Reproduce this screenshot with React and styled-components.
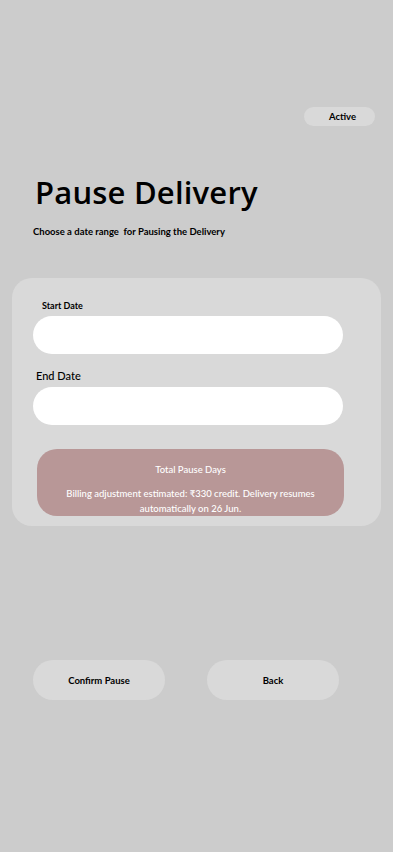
import React from "react";
import styled, { createGlobalStyle } from "styled-components";

const Global = createGlobalStyle`
  html, body { margin: 0; padding: 0; background: #cccccc; }
  body { font-family: "Lato", "Noto Sans", sans-serif; color: #000; }
  * { box-sizing: border-box; }
`;

const Page = styled.div`
  width: 393px;
  min-height: 852px;
  background: #cccccc;
  display: flex;
  flex-direction: column;
  padding-top: 107px;
`;

const TopRow = styled.div`
  display: flex;
  justify-content: flex-end;
  padding-right: 18px;
`;

const StatusPill = styled.div`
  width: 71px;
  height: 19px;
  border-radius: 10px;
  background: #d9d9d9;
  display: flex;
  align-items: center;
  justify-content: center;
  font-size: 9.5px;
  font-weight: 700;
  padding-left: 6px;
`;

const Title = styled.h1`
  margin: 46px 0 0 35px;
  font-family: "Open Sans", "Lato", sans-serif;
  font-size: 31px;
  line-height: 40px;
  font-weight: 600;
  letter-spacing: 0.2px;
`;

const Subtitle = styled.p`
  margin: 14px 0 0 33px;
  font-size: 9.5px;
  line-height: 12px;
  font-weight: 700;
  white-space: pre;
`;

const Card = styled.section`
  margin: 40px 12px 0 12px;
  height: 248px;
  background: #d9d9d9;
  border-radius: 20px;
  padding: 22px 38px 0 21px;
  display: flex;
  flex-direction: column;
`;

const Label = styled.label`
  font-size: ${(p) => p.$size}px;
  font-weight: ${(p) => p.$weight};
  line-height: 12px;
  margin-left: ${(p) => p.$indent}px;
  margin-bottom: ${(p) => p.$gap}px;
`;

const Field = styled.div`
  height: 38px;
  border-radius: 19px;
  background: #ffffff;
  margin-bottom: ${(p) => p.$after}px;
`;

const Summary = styled.div`
  margin: 0 -1px 0 4px;
  height: 67px;
  border-radius: 20px;
  background: #b89797;
  color: #ffffff;
  display: flex;
  flex-direction: column;
  align-items: center;
  padding: 15px 12px 0;
  text-align: center;
  font-size: 9.5px;
  font-weight: 500;
`;

const SummaryTitle = styled.div`
  line-height: 12px;
  margin-bottom: 10px;
`;

const SummaryText = styled.div`
  line-height: 15px;
`;

const Actions = styled.div`
  margin-top: 134px;
  padding: 0 54px 0 33px;
  display: flex;
  justify-content: space-between;
`;

const ActionButton = styled.button`
  width: 132px;
  height: 40px;
  border-radius: 20px;
  border: none;
  background: #d9d9d9;
  font-family: inherit;
  font-size: 9.5px;
  font-weight: 700;
  color: #000;
`;

export default function App() {
  return (
    <>
      <Global />
      <Page>
        <TopRow>
          <StatusPill>Active</StatusPill>
        </TopRow>
        <Title>Pause Delivery</Title>
        <Subtitle>Choose a date range  for Pausing the Delivery</Subtitle>
        <Card>
          <Label $size={9} $weight={700} $indent={9} $gap={4}>Start Date</Label>
          <Field $after={16} />
          <Label $size={11} $weight={500} $indent={3} $gap={5}>End Date</Label>
          <Field $after={24} />
          <Summary>
            <SummaryTitle>Total Pause Days</SummaryTitle>
            <SummaryText>
              Billing adjustment estimated: ₹330 credit. Delivery resumes
              <br />
              automatically on 26 Jun.
            </SummaryText>
          </Summary>
        </Card>
        <Actions>
          <ActionButton>Confirm Pause</ActionButton>
          <ActionButton>Back</ActionButton>
        </Actions>
      </Page>
    </>
  );
}
